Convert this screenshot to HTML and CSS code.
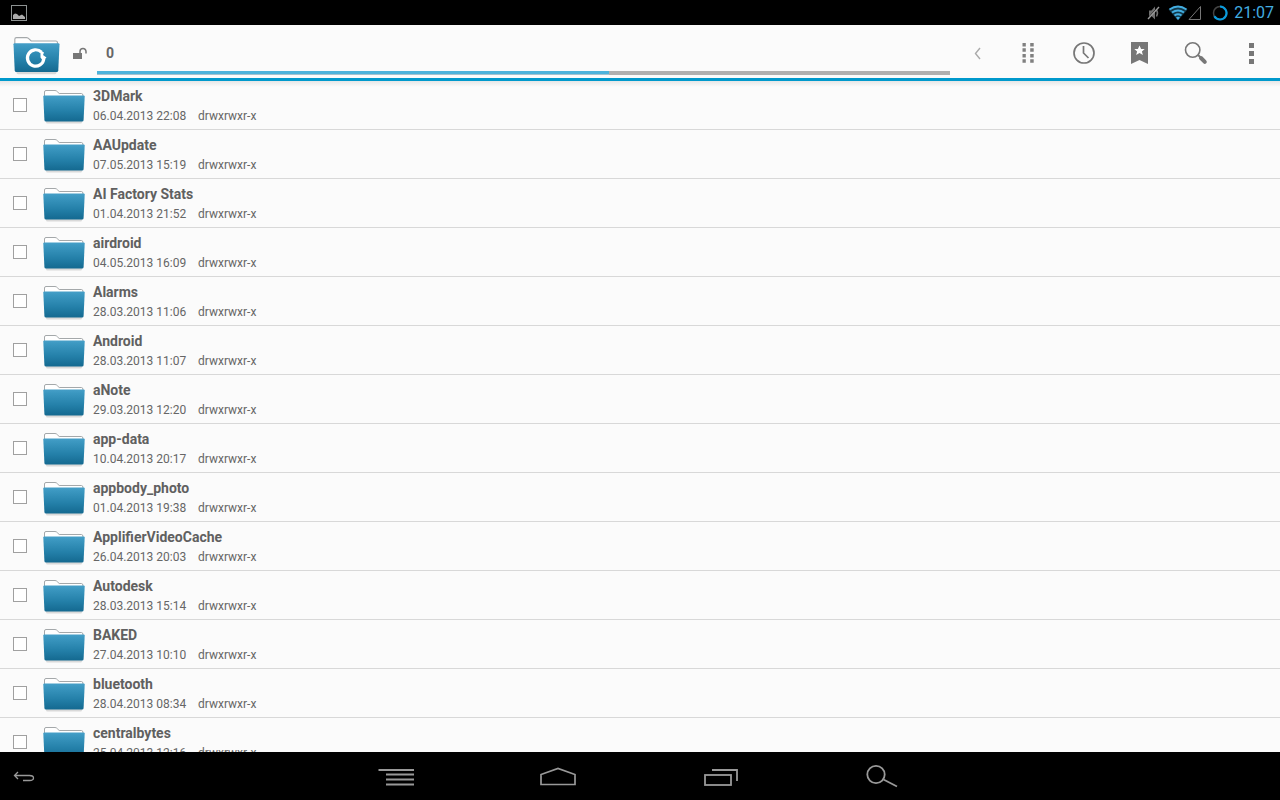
FILE: index.html
```html
<!DOCTYPE html>
<html lang="en">
<head>
<meta charset="utf-8">
<meta name="viewport" content="width=device-width, initial-scale=1">
<title>File manager</title>
<link rel="stylesheet" href="styles.css">
</head>
<body>
<svg class="defs" aria-hidden="true">
  <defs>
    <linearGradient id="folder-face" x1="0" y1="0" x2="0" y2="1">
      <stop offset="0" stop-color="#469fc8"/>
      <stop offset="0.12" stop-color="#3c98c1"/>
      <stop offset="0.6" stop-color="#2480a9"/>
      <stop offset="1" stop-color="#146990"/>
    </linearGradient>
  </defs>
  <symbol id="folder" viewBox="0 0 42 36">
    <rect x="3" y="31" width="36" height="3.4" rx="1.5" fill="#d9d9d9"/>
    <path d="M1.500 8V3Q1.500 1.500 3 1.500H12Q13.500 1.500 14.300 2.700L16.200 4.500H38.500Q39.700 4.500 39.900 6V10H1.500Z" fill="#fff" stroke="#a4a8aa"/>
    <path d="M0.300 7.500Q0.300 6.500 1.300 6.500H40.700Q41.700 6.500 41.700 7.500L40.600 31Q40.500 32.500 39 32.500H3Q1.500 32.500 1.400 31Z" fill="url(#folder-face)"/>
  </symbol>
</svg>
<header class="status">
  <svg width="18" height="18" viewBox="0 0 18 18" aria-hidden="true"><rect x="1.500" y="1.500" width="15" height="15" fill="none" stroke="#8c9191"/><path d="M3 15V11L5 9.500L7 10L9 12L12 10.500L15 13V15Z" fill="#aaa"/></svg>
  <div class="status-right">
    <svg width="16" height="18" viewBox="0 0 16 18" aria-hidden="true"><path d="M3 6.500H5.500L9 2.500V15.500L5.500 12H3Z" fill="#707070"/><path d="M10.500 6Q12.500 9 10.500 12.500" fill="none" stroke="#707070" stroke-width="1.500"/><path d="M2 14L12.500 2.500" stroke="#000"/><path d="M2 15L13 3" stroke="#999" stroke-width="1.400"/></svg>
    <svg class="wifi" width="20" height="18" viewBox="0 0 20 18" aria-hidden="true"><path d="M0.500 5.500Q10-1.500 19.500 5.500L10 16.500Z" fill="#123849"/><g fill="none" stroke="#43ade0" stroke-width="2"><path d="M1.500 5.500Q10-0.500 18.500 5.500"/><path d="M4 8.500Q10 4.500 16 8.500"/><path d="M6.500 11.500Q10 9 13.500 11.500"/></g><path d="M8 13.500Q10 12 12 13.500L10 16Z" fill="#43ade0"/></svg>
    <svg width="14" height="18" viewBox="0 0 14 18" aria-hidden="true"><path d="M1 15.500H12.500V2.500Z" fill="none" stroke="#777"/></svg>
    <svg class="battery" width="16" height="18" viewBox="0 0 16 18" aria-hidden="true"><circle cx="8" cy="9" r="6.500" fill="none" stroke="#444" stroke-width="1.500"/><path d="M8 2.500A6.500 6.500 0 1 1 2.400 12.300" fill="none" stroke="#0a9bdc" stroke-width="2.200"/></svg>
    <time>21:07</time>
  </div>
</header>

<div class="toolbar">
  <button class="home" aria-label="Home folder"><svg width="47" height="40" viewBox="0 0 47 40"><use href="#folder" x="0" y="0" width="47" height="40"/><path d="M28.500 16.200A8.200 8.200 0 1 0 30.800 22.800" fill="none" stroke="#fff" stroke-width="3.200"/><path d="M27.500 14.500L31 16.500L30 19L33.500 21.500L30 25L27.500 21.500Z" fill="#fff"/></svg></button>
  <svg class="lock" width="16" height="14" viewBox="0 0 16 14" role="img" aria-label="Unlocked"><rect x="1" y="6" width="9" height="6" fill="#777"/><path d="M8 6V4.500A2.900 2.900 0 0 1 14 4.500V6.500" fill="none" stroke="#777" stroke-width="1.500"/></svg>
  <div class="path">
    <input type="text" value="0" aria-label="Path">
    <div class="meter"><div class="meter-fill" style="width:60%"></div></div>
  </div>
  <button class="tool narrow" aria-label="Back"><svg width="24" height="24" viewBox="0 0 24 24"><path d="M14 7L9.500 12.500L14 18" fill="none" stroke="#aaa" stroke-width="1.400"/></svg></button>
  <button class="tool" aria-label="View"><svg width="24" height="24" viewBox="0 0 24 24" fill="#808080"><path d="M6.500 2h3.300v3.500H6.500zM14.200 2h3.500v3.500h-3.500zM6.500 7.200h3.300v3.500H6.500zM14.200 7.200h3.500v3.500h-3.500zM6.500 13h3.300v3.500H6.500zM14.200 13h3.500v3.500h-3.500zM6.500 18.200h3.300v3.500H6.500zM14.200 18.200h3.500v3.500h-3.500z"/></svg></button>
  <button class="tool" aria-label="History"><svg width="24" height="24" viewBox="0 0 24 24" fill="none" stroke="#777" stroke-width="1.700"><circle cx="12" cy="12" r="10"/><path d="M11.500 5V12L16.500 17"/></svg></button>
  <button class="tool" aria-label="Bookmarks"><svg width="24" height="24" viewBox="0 0 24 24"><path d="M3 1H20V23L11.500 19L3 23Z" fill="#777"/><path d="M11.500 4.500L13.100 8H16.700L13.900 10.400L14.900 14L11.500 11.900L8.100 14L9.100 10.400L6.300 8H9.900Z" fill="#fff"/></svg></button>
  <button class="tool" aria-label="Search"><svg width="24" height="24" viewBox="0 0 24 24" fill="none" stroke="#777"><circle cx="8.700" cy="9" r="7.200" stroke-width="1.600"/><path d="M14 14L17 16.800" stroke-width="2"/><path d="M17 17L20.800 20.800" stroke-width="4" stroke-linecap="round"/></svg></button>
  <button class="tool" aria-label="More options"><svg width="24" height="24" viewBox="0 0 24 24" fill="#777"><path d="M9 2h5v5h-5zM9 10h5v5h-5zM9 18h5v5h-5z"/></svg></button>
</div>

<main class="files">
  <ul id="list"></ul>
</main>

<nav class="nav" aria-label="System">
  <button class="nav-back" aria-label="Back"><svg width="24" height="24" viewBox="0 0 24 24" fill="none" stroke="#999" stroke-width="1.300"><path d="M6 5L2.500 8.500L6 12M2.500 8.500H17.500Q21.500 8.500 21.500 11T17.500 13.500H11"/></svg></button>
  <div class="nav-keys">
    <button aria-label="Menu"><svg width="40" height="28" viewBox="0 0 40 28"><path d="M1.500 7H37M9 11.500H37M9 16.500H37M9 21.500H37" stroke="#999" stroke-width="1.900"/></svg></button>
    <button aria-label="Home"><svg width="40" height="28" viewBox="0 0 40 28"><path d="M2 21.500V11.500L19 5.500L36 11.500V21.500Z" fill="none" stroke="#999" stroke-width="1.700"/></svg></button>
    <button aria-label="Recent apps"><svg width="40" height="28" viewBox="0 0 40 28" fill="none" stroke="#999" stroke-width="1.800"><rect x="4" y="12" width="26" height="10"/><path d="M11 7H36V18"/></svg></button>
    <button aria-label="Search"><svg width="40" height="28" viewBox="0 0 40 28" fill="none" stroke="#999" stroke-width="1.800"><circle cx="13" cy="11.500" r="8.700"/><path d="M20.500 16.500L34 23.500"/></svg></button>
  </div>
</nav>
<script src="files.js"></script>
</body>
</html>
```
FILE: styles.css
```css
* { box-sizing: border-box; }
body {
  margin: 0;
  height: 100vh;
  display: flex;
  flex-direction: column;
  overflow: hidden;
  background: #fbfbfb;
  color: #666;
  font-family: Roboto, "Noto Sans", sans-serif;
}
button { border: 0; padding: 0; background: none; display: flex; align-items: center; justify-content: center; }
svg { display: block; flex: none; }
.defs { position: absolute; width: 0; height: 0; }

.status {
  flex: none;
  height: 25px;
  padding: 0 6px 0 10px;
  display: flex;
  align-items: center;
  justify-content: space-between;
  background: #000;
}
.status-right { display: flex; align-items: center; }
.wifi { margin-left: 6px; }
.battery { margin: 0 6px 0 10px; }
.status time { color: #43ade0; font-size: 16px; line-height: 24px; }

.toolbar {
  flex: none;
  height: 56px;
  display: flex;
  align-items: stretch;
  border-bottom: 3px solid #0099cc;
}
.home { padding: 9px 11px 0 13px; }
.lock { align-self: center; margin: 4px 9px 0 1px; }
.path { flex: 1; display: flex; flex-direction: column; margin-right: 6px; padding-bottom: 3px; }
.path input {
  flex: 1;
  width: 100%;
  min-height: 0;
  border: 0;
  outline: 0;
  padding: 10px 9px 0;
  background: none;
  color: #666;
  font: bold 14px Roboto, "Noto Sans", sans-serif;
}
.meter { height: 4px; background: #b0b0b0; }
.meter-fill { height: 4px; background: #4db3dc; border-bottom: 1px solid #a3c3d0; }
.tool { width: 56px; padding-top: 3px; }
.narrow { width: 44px; }

.files { flex: 1; min-height: 0; overflow: hidden; background: linear-gradient(#e6e6e6, #fbfbfb 6px); }
.files ul { margin: 0; padding: 0; list-style: none; }
.files li { border-bottom: 1px solid #d8d8d8; }
.files label { display: flex; height: 48px; padding-left: 13px; }
.files input {
  appearance: none;
  flex: none;
  width: 14px;
  height: 14px;
  margin: 17px 16px 0 0;
  border: 1px solid #a0a0a0;
  background: #fff;
}
.files input:checked { background: #0099cc; }
.folder { margin: 8px 8px 0 0; }
.name { display: block; padding-top: 5px; color: #606060; font-size: 14px; line-height: 20px; font-weight: bold; }
.meta { display: flex; font-size: 12px; line-height: 20px; }
.date { width: 105px; }

.nav {
  flex: none;
  height: 48px;
  display: grid;
  grid-template-columns: 1fr auto 1fr;
  background: #000;
}
.nav-back { justify-self: start; padding: 6px 12px 0; }
.nav-keys { display: flex; gap: 98px; padding-top: 1px; }
.nav-keys button { width: 64px; }
```
FILE: files.js
```js
const files = [
  ["3DMark", "06.04.2013 22:08"],
  ["AAUpdate", "07.05.2013 15:19"],
  ["AI Factory Stats", "01.04.2013 21:52"],
  ["airdroid", "04.05.2013 16:09"],
  ["Alarms", "28.03.2013 11:06"],
  ["Android", "28.03.2013 11:07"],
  ["aNote", "29.03.2013 12:20"],
  ["app-data", "10.04.2013 20:17"],
  ["appbody_photo", "01.04.2013 19:38"],
  ["ApplifierVideoCache", "26.04.2013 20:03"],
  ["Autodesk", "28.03.2013 15:14"],
  ["BAKED", "27.04.2013 10:10"],
  ["bluetooth", "28.04.2013 08:34"],
  ["centralbytes", "25.04.2013 12:16"]
];
document.getElementById("list").innerHTML = files.map(([name, date]) => `
  <li><label>
    <input type="checkbox">
    <svg class="folder" width="42" height="36" aria-hidden="true"><use href="#folder"/></svg>
    <span><span class="name">${name}</span><span class="meta"><span class="date">${date}</span><span>drwxrwxr-x</span></span></span>
  </label></li>`).join("");
```
